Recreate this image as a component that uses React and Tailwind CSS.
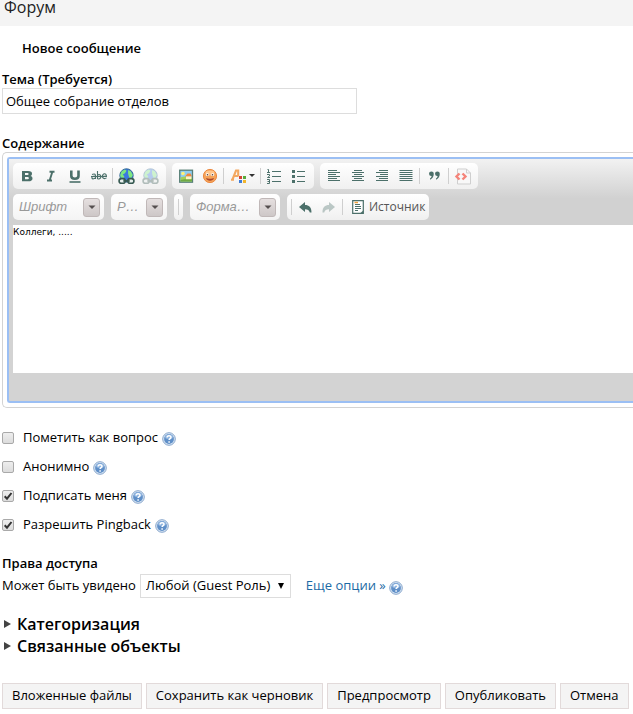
import React from "react";

const INK = "#4c706a";

function Svg({ children, size = 16, className = "" }) {
  return (
    <svg width={size} height={size} viewBox="0 0 16 16" className={`shrink-0 ${className}`} aria-hidden="true">
      {children}
    </svg>
  );
}

const Bold = () => (
  <Svg>
    <path fillRule="evenodd" fill={INK} d="M3 3h6c3 0 4 1 4 2.700c0 1.200-.6 1.900-1.600 2.200c1.300.3 2.100 1.100 2.100 2.500c0 1.900-1.400 2.800-4 2.800H3zM6 5v2h2.500c1.500 0 1.500-2 0-2zM6 9v2.300h2.600c1.700 0 1.700-2.300 0-2.300z" />
  </Svg>
);
const Italic = () => (
  <Svg><path d="M6.500 3.700h5M4 12.500h5M9.300 4L6.700 12.300" stroke={INK} strokeWidth="1.900" fill="none" /></Svg>
);
const Underline = () => (
  <Svg>
    <path d="M4.300 2.500v5.500c0 3.600 7.200 3.600 7.200 0V2.500" stroke={INK} strokeWidth="2.600" fill="none" />
    <path d="M2.500 14h11" stroke={INK} strokeWidth="1.600" />
  </Svg>
);
const Strike = () => (
  <Svg>
    <g stroke={INK} strokeWidth="1.100" fill="none">
      <path d="M1 6.500c3-1.200 3.500 0 3.500 1.500v3M4.500 8C1.500 8 .6 9 .9 10c.4 1.300 3 1 3.600-.5M6.500 3v8M6.500 7c4-2 4.500 4 1 4c-.5 0-1-.3-1-.7M15.500 9.900c-4 2.600-5.500-3-2.700-4c2-.5 2.600 1 2.600 2.400h-4" />
      <path d="M0 8.500h16" />
    </g>
  </Svg>
);
const LinkGlobe = ({ faded }) => (
  <Svg size={17} className={faded ? "opacity-35" : ""}>
    <circle cx="8" cy="7" r="6.300" fill="#3c78e0" stroke="#285e88" strokeWidth=".8" />
    <path d="M2 6.500L3.500 3L6.500 1.300L8 2.500L6.500 5L4.500 6L6 8L5 9.500L2.500 9zM9.500 1.800L12 3L14 6.500L12.500 9.500L10.500 9L9.500 5.500z" fill="#7fe880" />
    <g fill="#e7efed" stroke="#365951" strokeWidth="1.500">
      <rect x="1" y="10" width="5.800" height="4.400" rx="2.200" />
      <rect x="9.200" y="10" width="5.800" height="4.400" rx="2.200" />
    </g>
    <path d="M5 12.200h6" fill="none" stroke="#365951" strokeWidth="1.700" />
  </Svg>
);
const Picture = () => (
  <Svg>
    <rect x="1.700" y="2.200" width="12.800" height="12" fill="#8fcdf2" stroke="#587f76" strokeWidth="1.300" />
    <path d="M2.500 9.500c3-1.500 7-1.500 11.400 0v4H2.500z" fill="#a4cf58" />
    <path d="M2.500 12c4-1.500 7-.5 11.400-1v2.500H2.500z" fill="#6fa944" />
    <circle cx="5" cy="5.500" r="1.800" fill="#fff176" />
    <path d="M7 8.500L9.500 5.500h3L14 8.500z" fill="#f0883a" />
    <path d="M8 8.500h5.300v2.700H8z" fill="#fff0c4" />
  </Svg>
);
const Smiley = () => (
  <Svg>
    <circle cx="8" cy="8" r="6.600" fill="#f5a35a" stroke="#ec8a42" />
    <ellipse cx="8" cy="5" rx="4.500" ry="2.400" fill="#ffc68c" />
    <ellipse cx="5.300" cy="6.700" rx="1.600" ry="1.400" fill="#fff" />
    <ellipse cx="10.700" cy="6.700" rx="1.600" ry="1.400" fill="#fff" />
    <circle cx="5.500" cy="6.800" r=".8" fill="#593d30" />
    <circle cx="10.500" cy="6.800" r=".8" fill="#593d30" />
    <path d="M4 10c2 1 6 1 8 0c-.8 3.600-7.200 3.600-8 0z" fill="#a9472c" />
  </Svg>
);
const TextColor = () => (
  <svg width="25" height="16" viewBox="0 0 25 16" className="shrink-0" aria-hidden="true">
    <path d="M2.500 11.500L6 2.500H8.200V8M4 8H8.500M1 11.700h3" fill="none" stroke="#f3a860" strokeWidth="2.100" />
    <path d="M9 8h3v3H9z" fill="#d64335" />
    <path d="M13 8h3v3h-3z" fill="#57aa3b" />
    <path d="M9 12h3v3H9z" fill="#3d7bd6" />
    <path d="M13 12h3v3h-3z" fill="#f2b52c" />
    <path d="M19 6h6l-3 3z" fill="#333" />
  </svg>
);
const Numbered = () => (
  <Svg>
    <path d="M6 3.500h9M6 8.500h9M6 13.500h9" stroke={INK} />
    <path d="M1.500 1.500h1v3M1 4.500h3M1 6.500h2.500v1.500L1.500 9.500h2.500M1 11.500h2.500v4H1M1.500 13.500h2" fill="none" stroke={INK} />
  </Svg>
);
const Bulleted = () => (
  <Svg>
    <path d="M7 3.500h8M7 8.500h8M7 13.500h8" stroke={INK} />
    <path d="M2 2h3v3H2zM2 7h3v3H2zM2 12h3v3H2z" fill={INK} />
  </Svg>
);
const ALIGN_PATHS = {
  left: "M2 2.500h9M2 4.500h12M2 6.500h8M2 8.500h12M2 10.500h9M2 12.500h12",
  center: "M4 2.500h8M2 4.500h12M4 6.500h8M2 8.500h12M4 10.500h8M2 12.500h12",
  right: "M5 2.500h9M2 4.500h12M6 6.500h8M2 8.500h12M5 10.500h9M2 12.500h12",
  justify: "M1.500 2.500h13M1.500 4.500h13M1.500 6.500h13M1.500 8.500h13M1.500 10.500h13M1.500 12.500h13",
};
const Align = ({ kind }) => (
  <Svg><path d={ALIGN_PATHS[kind]} stroke={INK} /></Svg>
);
const Quote = () => (
  <Svg>
    <path d="M3 5.800a2.400 2.400 0 1 1 4.800 0c0 3-1.500 5-3.800 6v-1.200c1-.8 1.500-1.500 1.600-2.500A2.400 2.400 0 0 1 3 5.800zM9 5.800a2.400 2.400 0 1 1 4.800 0c0 3-1.500 5-3.800 6v-1.200c1-.8 1.500-1.500 1.600-2.500A2.400 2.400 0 0 1 9 5.800z" fill={INK} />
  </Svg>
);
const CodePage = () => (
  <svg width="18" height="17" viewBox="0 0 18 17" className="shrink-0" aria-hidden="true">
    <path d="M3.500 1h9l4 4v11h-13zM12.500 1v4h4" fill="#f8f8f8" stroke="#cfcfcf" />
    <path d="M5.500 5.500L2.500 8.500L5.500 11.500M8.500 5.500l3 3l-3 3" fill="none" stroke="#f5847a" strokeWidth="2.400" />
  </svg>
);
const Undo = ({ flip }) => (
  <Svg className={flip ? "-scale-x-100 opacity-35" : ""}>
    <path d="M2 8L8 3v3c4 0 6.500 2 6.500 7.500h-1.700c-.7-2.400-2-3.300-4.800-3.300V13z" fill={INK} />
  </Svg>
);
const SourceIcon = () => (
  <Svg>
    <path d="M2.700 1.700h10.600v12.600H2.700z" fill="#fff" stroke={INK} strokeWidth="1.200" />
    <path d="M4.500 3.500h3.500" stroke="#f2a33c" strokeWidth="1.500" />
    <path d="M5 5.500h5M5 7.500h6M5 9.500h6M5 11.500h3" stroke={INK} />
    <path d="M10.500 14l3-2.800v3z" fill={INK} />
  </Svg>
);

function Tool({ label, className = "w-6", children }) {
  return (
    <button type="button" aria-label={label} className={`flex h-[26px] shrink-0 items-center justify-center ${className}`}>
      {children}
    </button>
  );
}

const Sep = () => <span className="mx-px h-4 w-px shrink-0 bg-[#cfcfcf]" />;

function Group({ className = "", children }) {
  return (
    <div className={`flex h-[26px] shrink-0 items-center rounded-[5px] bg-gradient-to-b from-white to-[#f0f0f0] ${className}`}>
      {children}
    </div>
  );
}

function Combo({ label, text, className }) {
  return (
    <div className={`grid h-[26px] shrink-0 items-center rounded-[5px] bg-gradient-to-b from-white to-[#f4f4f4] ${className}`}>
      <select
        aria-label={label}
        className="col-start-1 row-start-1 h-[26px] w-full appearance-none bg-transparent pl-[6px] font-['Liberation_Sans',sans-serif] text-[13px] text-[#999] italic"
      >
        <option>{text}</option>
      </select>
      <span className="pointer-events-none col-start-1 row-start-1 mr-1 flex h-[19px] w-[17px] items-start justify-center justify-self-end rounded-[3px] border border-[#c0b8b8] bg-gradient-to-b from-[#e6e0e0] to-[#cdc7c7] pt-[6px]">
        <svg width="8" height="5" viewBox="0 0 8 5" aria-hidden="true">
          <path d="M.5 .5h7L4 4z" fill="#554f4f" />
        </svg>
      </span>
    </div>
  );
}

function Help() {
  return (
    <svg width="14" height="14" viewBox="0 0 14 14" className="shrink-0" role="img" aria-label="Справка">
      <circle cx="7" cy="7" r="6.300" fill="#dce8f5" stroke="#86a5cb" strokeWidth="1" />
      <circle cx="7" cy="7" r="4.900" fill="#5f8fc8" />
      <ellipse cx="7" cy="4.700" rx="4" ry="2.500" fill="#8db3de" />
      <path d="M5.100 5.600c0-2.600 3.900-2.500 3.900-.3c0 1.300-1.900 1.400-1.900 2.800M7.100 9.200v1.500" fill="none" stroke="#fff" strokeWidth="1.500" />
    </svg>
  );
}

function Check({ id, label, checked }) {
  return (
    <div className="flex h-[29px] items-center">
      <span className="mr-[9px] grid size-3 shrink-0">
        <input
          id={id}
          type="checkbox"
          defaultChecked={checked}
          className="peer col-start-1 row-start-1 size-3 appearance-none rounded-[2px] border border-[#a9a9a9] bg-gradient-to-b from-[#eee] to-[#dcdcdc]"
        />
        <svg viewBox="0 0 12 12" className="pointer-events-none invisible col-start-1 row-start-1 size-3 peer-checked:visible" aria-hidden="true">
          <path d="M2.700 6.200l2.300 2.500L9.500 3" fill="none" stroke="#333" strokeWidth="2" />
        </svg>
      </span>
      <label htmlFor={id} className="mr-1">{label}</label>
      <span className="pt-[3px]"><Help /></span>
    </div>
  );
}

function Section({ title }) {
  return (
    <h3>
      <button type="button" aria-expanded="false" className="flex h-[22px] items-center gap-[5px] text-base font-semibold">
        <svg width="10" height="10" viewBox="0 0 10 10" aria-hidden="true">
          <path d="M2 1l7 4l-7 4z" fill="#444" />
        </svg>
        {title}
      </button>
    </h3>
  );
}

const ACTIONS = ["Вложенные файлы", "Сохранить как черновик", "Предпросмотр", "Опубликовать", "Отмена"];

export default function App() {
  return (
    <div className="min-h-screen bg-white pb-1 font-['Open_Sans',sans-serif] text-[13px] text-black">
      <header className="h-[26px] bg-[#f4f4f4] pl-1">
        <h1 className="text-base leading-[14px] text-[#222]">Форум</h1>
      </header>

      <form className="pl-[2px]">
        <h2 className="mt-3 ml-5 leading-5 font-semibold">Новое сообщение</h2>

        <label htmlFor="subject" className="mt-3 block leading-[18px] font-semibold">Тема (Требуется)</label>
        <input
          id="subject"
          defaultValue="Общее собрание отделов"
          className="block h-[26px] w-[355px] border border-[#ddd] px-[3px]"
        />

        <label htmlFor="body" className="mt-5 block leading-[18px] font-semibold">Содержание</label>
        <div className="rounded-l-[5px] border border-r-0 border-[#d3d3d3] py-1 pl-1">
          <div className="rounded-l-[3px] border-2 border-r-0 border-[#9bbff4] bg-[#d3d3d3]">
            <div className="flex flex-col gap-[5px] bg-gradient-to-b from-[#f2f2f2] to-[#d1d1d1] to-60% pt-1 pb-[5px] pl-1">
              <div className="flex gap-[6px]">
                <Group className="w-[153px] pl-[2px]">
                  <Tool label="Полужирный"><Bold /></Tool>
                  <Tool label="Курсив"><Italic /></Tool>
                  <Tool label="Подчеркнутый"><Underline /></Tool>
                  <Tool label="Зачеркнутый"><Strike /></Tool>
                  <Sep />
                  <Tool label="Ссылка"><LinkGlobe /></Tool>
                  <Tool label="Убрать ссылку"><LinkGlobe faded /></Tool>
                </Group>
                <Group className="w-[142px] pl-[2px]">
                  <Tool label="Изображение"><Picture /></Tool>
                  <Tool label="Смайлы"><Smiley /></Tool>
                  <Sep />
                  <Tool label="Цвет текста" className="w-[34px]"><TextColor /></Tool>
                  <Sep />
                  <Tool label="Нумерованный список"><Numbered /></Tool>
                  <Tool label="Маркированный список"><Bulleted /></Tool>
                </Group>
                <Group className="w-[158px] pl-[2px]">
                  <Tool label="По левому краю"><Align kind="left" /></Tool>
                  <Tool label="По центру"><Align kind="center" /></Tool>
                  <Tool label="По правому краю"><Align kind="right" /></Tool>
                  <Tool label="По ширине"><Align kind="justify" /></Tool>
                  <Sep />
                  <Tool label="Цитата" className="w-[26px]"><Quote /></Tool>
                  <Sep />
                  <Tool label="Код" className="w-[26px]"><CodePage /></Tool>
                </Group>
              </div>
              <div className="flex gap-[7px]">
                <Combo label="Шрифт" text="Шрифт" className="w-[91px]" />
                <Combo label="Размер" text="Р…" className="w-[56px]" />
                <Group className="w-[9px] justify-center"><Sep /></Group>
                <Combo label="Форматирование" text="Форма…" className="w-[90px]" />
                <Group className="w-[142px] pl-[3px]">
                  <Sep />
                  <Tool label="Отменить"><Undo /></Tool>
                  <Tool label="Повторить"><Undo flip /></Tool>
                  <Sep />
                  <button type="button" className="flex h-[26px] items-center gap-[3px] pl-[6px] text-xs text-[#555]">
                    <SourceIcon />
                    Источник
                  </button>
                </Group>
              </div>
            </div>
            <div className="pb-7 pl-1">
              <textarea
                id="body"
                defaultValue="Коллеги, ....."
                className="block h-[148px] w-full resize-none bg-white font-['DejaVu_Sans',sans-serif] text-[9px] leading-[14px]"
              />
            </div>
          </div>
        </div>

        <div className="mt-[15px]">
          <Check id="question" label="Пометить как вопрос" />
          <Check id="anonymous" label="Анонимно" />
          <Check id="subscribe" label="Подписать меня" checked />
          <Check id="pingback" label="Разрешить Pingback" checked />
        </div>

        <h3 className="mt-[14px] leading-5 font-semibold">Права доступа</h3>
        <div className="flex h-[26px] items-center">
          <label htmlFor="visible" className="mr-1">Может быть увидено</label>
          <span className="grid w-[151px] items-center">
            <select id="visible" className="col-start-1 row-start-1 h-6 w-full appearance-none border border-[#ddd] bg-white pl-[5px]">
              <option>Любой (Guest Роль)</option>
            </select>
            <svg width="6" height="6" viewBox="0 0 6 6" className="pointer-events-none col-start-1 row-start-1 mr-[7px] justify-self-end" aria-hidden="true">
              <path d="M0 0h6L3 6z" fill="#000" />
            </svg>
          </span>
          <a href="#options" className="mr-[3px] ml-[15px] text-[#1c6aa5]">Еще опции »</a>
          <span className="pt-[3px]"><Help /></span>
        </div>

        <div className="mt-[14px]">
          <Section title="Категоризация" />
          <Section title="Связанные объекты" />
        </div>

        <div className="mt-[26px] flex gap-1">
          {ACTIONS.map((name) => (
            <button key={name} type="button" className="h-[26px] shrink-0 border border-[#e2dada] bg-[#f4f4f4] px-[9px] whitespace-nowrap">
              {name}
            </button>
          ))}
        </div>
      </form>
    </div>
  );
}
